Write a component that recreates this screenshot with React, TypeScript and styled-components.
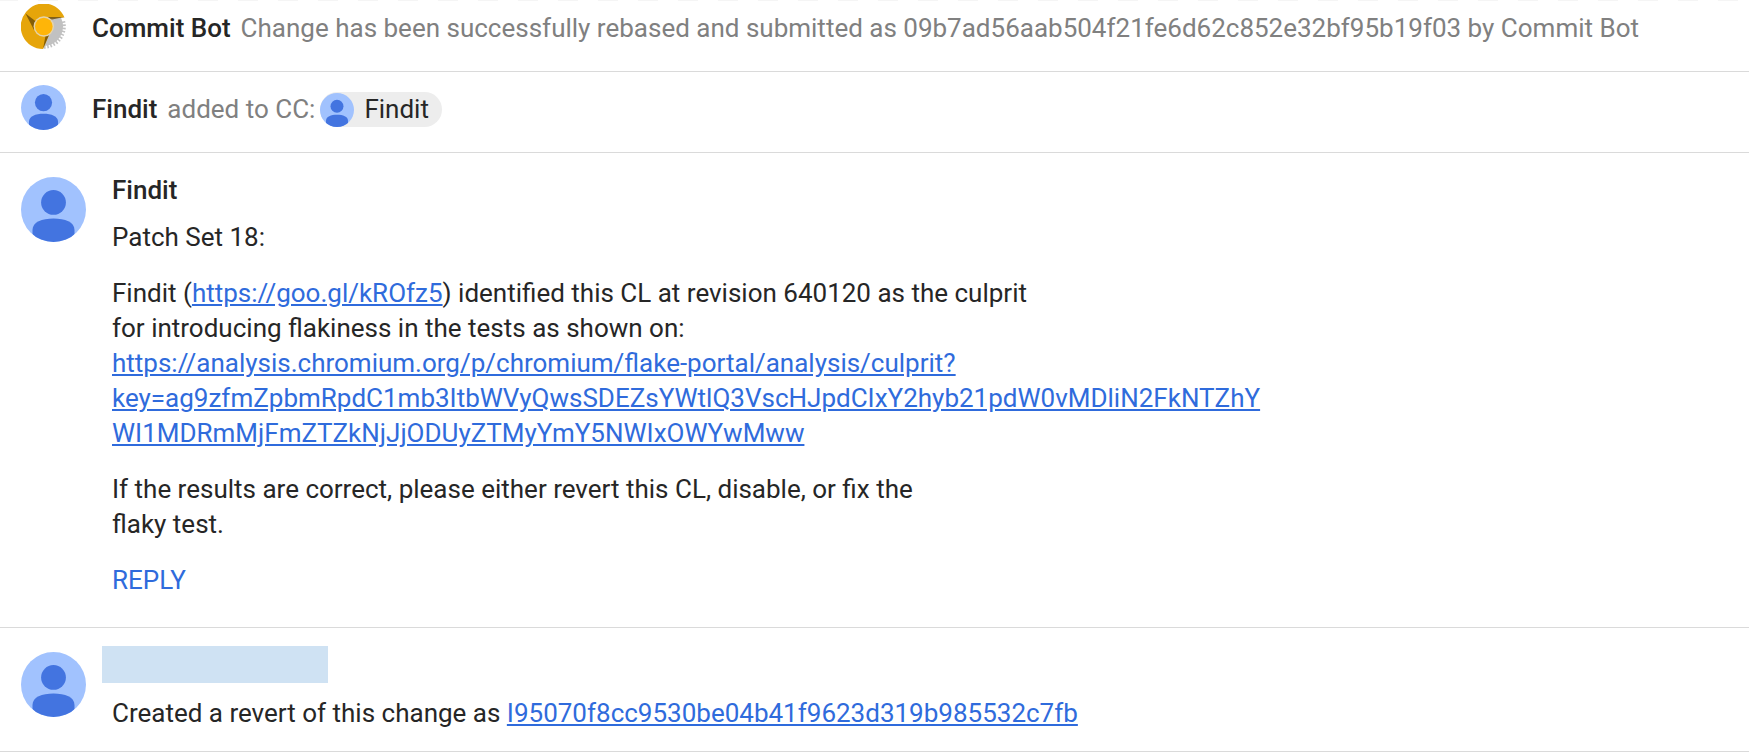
import React from "react";
import styled, { createGlobalStyle } from "styled-components";

const GlobalStyle = createGlobalStyle`
  *, *::before, *::after { box-sizing: border-box; }
  body {
    margin: 0;
    background: #fff;
    color: #262626;
    font-family: Roboto, sans-serif;
    font-size: 26px;
    line-height: 35px;
  }
`;

const Log = styled.main`
  background: repeating-linear-gradient(90deg, #f5f5f5 0 20px, #fff 20px 40px) -2px 0 / calc(100% + 2px) 1px no-repeat;
`;

const Entry = styled.article`
  display: flex;
  align-items: flex-start;
  padding: 0 21px;
  border-bottom: 1px solid #dadada;
`;

const EventEntry = styled(Entry)<{ $first?: boolean }>`
  gap: 26px;
  padding-top: ${(p) => (p.$first ? 4 : 13)}px;
  padding-bottom: 22px;
`;

const CommentEntry = styled(Entry)<{ $compact?: boolean }>`
  gap: 26px;
  padding-top: ${(p) => (p.$compact ? 18 : 20)}px;
  padding-bottom: ${(p) => (p.$compact ? 20 : 29)}px;

  > svg { margin-top: ${(p) => (p.$compact ? 6 : 4)}px; }
`;

const AvatarArt = styled.svg<{ $size: number }>`
  display: block;
  flex: none;
  width: ${(p) => p.$size}px;
  height: ${(p) => p.$size}px;
`;

const EventLine = styled.div`
  display: flex;
  flex-wrap: wrap;
  align-items: center;
  column-gap: 10px;
  padding-top: 7px;
`;

const Author = styled.strong`
  font-weight: 500;
`;

const EventText = styled.span`
  color: #808080;
`;

const CcText = styled(EventText)`
  display: flex;
  align-items: center;
  gap: 5px;
`;

const Chip = styled.span`
  display: inline-flex;
  align-items: center;
  gap: 10px;
  padding-right: 13px;
  border-radius: 18px;
  background: #ededed;
  color: #262626;
`;

const Body = styled.div`
  flex: 1;
  min-width: 0;
  max-width: 1154px;
  overflow-wrap: anywhere;
`;

const Name = styled.h2`
  margin: 0 0 12px;
  font-size: 26px;
  font-weight: 500;
`;

const Paragraph = styled.p`
  margin: 0 0 21px;
  &:last-child { margin: 0; }
`;

const Link = styled.a`
  color: #2f6bdc;
  text-decoration: underline;
`;

const ReplyButton = styled.button`
  display: block;
  padding: 0;
  border: 0;
  background: none;
  color: #2f6bdc;
  font: inherit;
  text-transform: uppercase;
  cursor: pointer;
`;

const HiddenName = styled.div`
  width: 226px;
  height: 37px;
  margin: 0 0 13px -10px;
  background: #cfe2f3;
`;

function UserAvatar({ size }: { size: number }) {
  const id = React.useId();
  return (
    <AvatarArt $size={size} viewBox="0 0 65 65" aria-hidden="true">
      <clipPath id={id}>
        <circle cx="32.5" cy="32.5" r="32.5" />
      </clipPath>
      <g clipPath={`url(#${id})`}>
        <rect width="65" height="65" fill="#a1c2fe" />
        <circle cx="32.5" cy="25.4" r="12.4" fill="#4374e0" />
        <path d="M11.5 65V53C11.5 45 21 41.5 32.5 41.5S53.5 45 53.5 53V65Z" fill="#4374e0" />
      </g>
    </AvatarArt>
  );
}

const teeth = Array.from({ length: 12 }, (_, i) => -12 + i * 9);

function BotAvatar() {
  return (
    <AvatarArt $size={45} viewBox="0 0 45 45" aria-hidden="true">
      <circle cx="22.5" cy="22.5" r="19.5" fill="#c1c1c1" />
      {teeth.map((angle) => (
        <rect key={angle} x="41" y="21.5" width="3.8" height="1.6" fill="#c1c1c1" transform={`rotate(${angle} 22.5 22.5)`} />
      ))}
      <path d="M22 45A22.5 22.5 0 0 1 5 8A22.5 22.5 0 0 1 43.5 13.5H22.5L28 31Z" fill="#e6a50a" />
      <path d="M26 13H43L30 15.800Z M4.500 9.500L13 26L15 17.500Z M22 45L28 31L24.500 32Z" fill="#6b4b05" fillOpacity="0.8" />
      <circle cx="22.8" cy="22.5" r="10.2" fill="#e4d3ac" />
      <circle cx="22.8" cy="22.5" r="8.8" fill="#ffb508" />
    </AvatarArt>
  );
}

export default function App() {
  return (
    <>
      <GlobalStyle />
      <Log>
        <EventEntry $first>
          <BotAvatar />
          <EventLine>
            <Author>Commit Bot</Author>
            <EventText>
              Change has been successfully rebased and submitted as 09b7ad56aab504f21fe6d62c852e32bf95b19f03 by Commit Bot
            </EventText>
          </EventLine>
        </EventEntry>
        <EventEntry>
          <UserAvatar size={45} />
          <EventLine>
            <Author>Findit</Author>
            <CcText>
              added to CC:
              <Chip>
                <UserAvatar size={34} />
                Findit
              </Chip>
            </CcText>
          </EventLine>
        </EventEntry>
        <CommentEntry>
          <UserAvatar size={65} />
          <Body>
            <Name>Findit</Name>
            <Paragraph>Patch Set 18:</Paragraph>
            <Paragraph>
              Findit (<Link href="https://goo.gl/kROfz5">https://goo.gl/kROfz5</Link>) identified this CL at revision 640120 as the culprit
              <br />
              for introducing flakiness in the tests as shown on:
              <br />
              <Link href="https://analysis.chromium.org/p/chromium/flake-portal/analysis/culprit">
                https://analysis.chromium.org/p/chromium/flake-portal/analysis/culprit?key=ag9zfmZpbmRpdC1mb3ItbWVyQwsSDEZsYWtlQ3VscHJpdCIxY2hyb21pdW0vMDliN2FkNTZhYWI1MDRmMjFmZTZkNjJjODUyZTMyYmY5NWIxOWYwMww
              </Link>
            </Paragraph>
            <Paragraph>
              If the results are correct, please either revert this CL, disable, or fix the
              <br />
              flaky test.
            </Paragraph>
            <ReplyButton type="button">Reply</ReplyButton>
          </Body>
        </CommentEntry>
        <CommentEntry $compact>
          <UserAvatar size={65} />
          <Body>
            <HiddenName />
            <Paragraph>
              Created a revert of this change as{" "}
              <Link href="#I95070f8cc9530be04b41f9623d319b985532c7fb">I95070f8cc9530be04b41f9623d319b985532c7fb</Link>
            </Paragraph>
          </Body>
        </CommentEntry>
      </Log>
    </>
  );
}
